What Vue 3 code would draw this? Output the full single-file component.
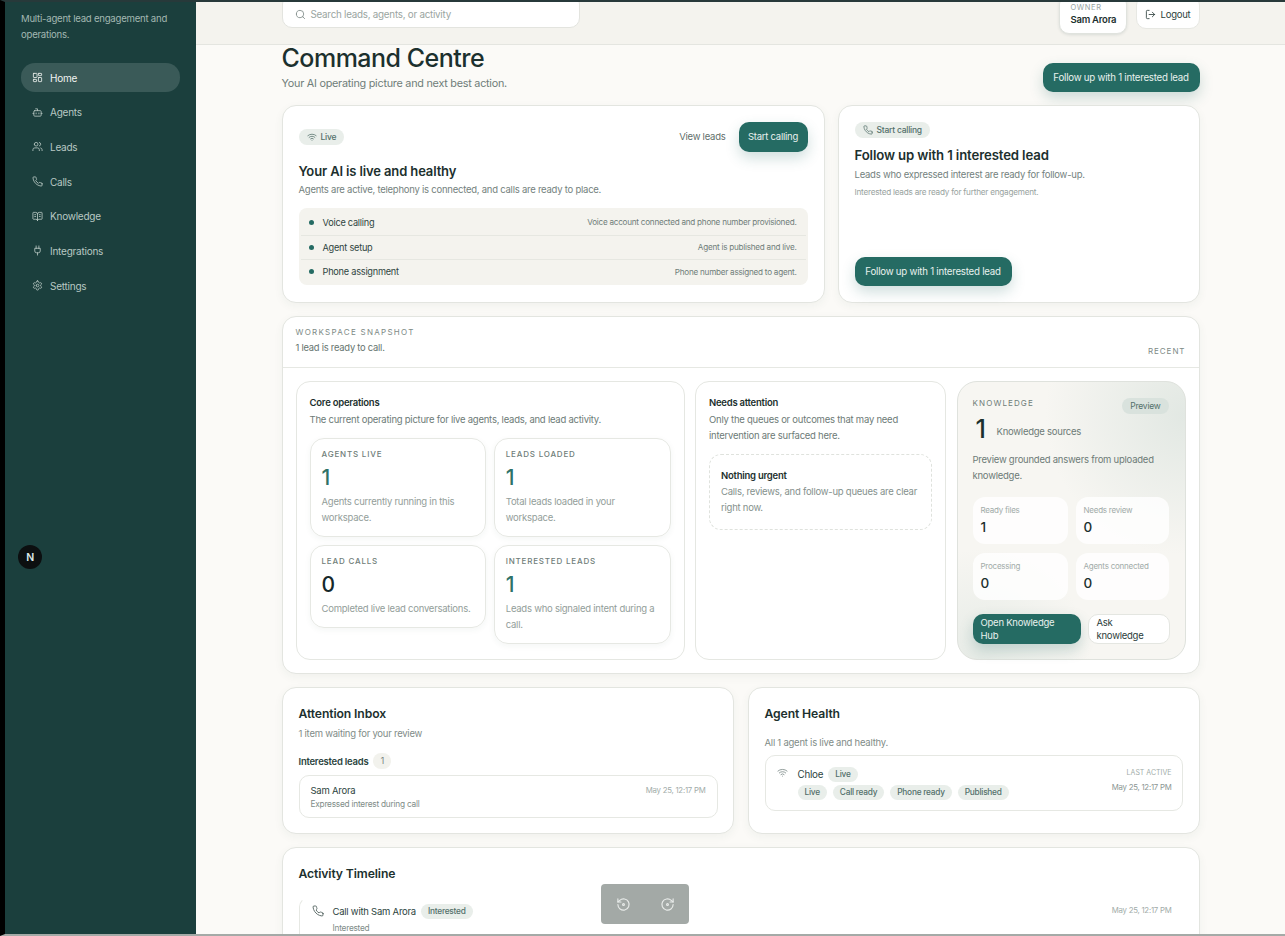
<script setup>
import { h } from 'vue'

const ICONS = {
  home: ['M4 3h6a1 1 0 0 1 1 1v7a1 1 0 0 1-1 1H4a1 1 0 0 1-1-1V4a1 1 0 0 1 1-1z', 'M15 3h5a1 1 0 0 1 1 1v3a1 1 0 0 1-1 1h-5a1 1 0 0 1-1-1V4a1 1 0 0 1 1-1z', 'M15 12h5a1 1 0 0 1 1 1v7a1 1 0 0 1-1 1h-5a1 1 0 0 1-1-1v-7a1 1 0 0 1 1-1z', 'M4 16h5a1 1 0 0 1 1 1v3a1 1 0 0 1-1 1H4a1 1 0 0 1-1-1v-3a1 1 0 0 1 1-1z'],
  bot: ['M12 8V4H8', 'M6 8h12a2 2 0 0 1 2 2v8a2 2 0 0 1-2 2H6a2 2 0 0 1-2-2v-8a2 2 0 0 1 2-2z', 'M2 14h2', 'M20 14h2', 'M15 13v2', 'M9 13v2'],
  users: ['M16 21v-2a4 4 0 0 0-4-4H6a4 4 0 0 0-4 4v2', 'M5 7a4 4 0 1 0 8 0a4 4 0 1 0-8 0', 'M22 21v-2a4 4 0 0 0-3-3.87', 'M16 3.13a4 4 0 0 1 0 7.75'],
  phone: ['M22 16.92v3a2 2 0 0 1-2.18 2 19.79 19.79 0 0 1-8.63-3.07 19.5 19.5 0 0 1-6-6 19.79 19.79 0 0 1-3.07-8.67A2 2 0 0 1 4.11 2h3a2 2 0 0 1 2 1.72 12.84 12.84 0 0 0 .7 2.81 2 2 0 0 1-.45 2.11L8.09 9.91a16 16 0 0 0 6 6l1.27-1.27a2 2 0 0 1 2.11-.45 12.84 12.84 0 0 0 2.81.7A2 2 0 0 1 22 16.92z'],
  book: ['M12 7v14', 'M16 12h2', 'M16 8h2', 'M3 18a1 1 0 0 1-1-1V4a1 1 0 0 1 1-1h5a4 4 0 0 1 4 4 4 4 0 0 1 4-4h5a1 1 0 0 1 1 1v13a1 1 0 0 1-1 1h-6a3 3 0 0 0-3 3 3 3 0 0 0-3-3z', 'M6 12h2', 'M6 8h2'],
  plug: ['M12 22v-5', 'M9 8V2', 'M15 8V2', 'M18 8v5a4 4 0 0 1-4 4h-4a4 4 0 0 1-4-4V8Z'],
  settings: ['M12.22 2h-.44a2 2 0 0 0-2 2v.18a2 2 0 0 1-1 1.73l-.43.25a2 2 0 0 1-2 0l-.15-.08a2 2 0 0 0-2.73.73l-.22.38a2 2 0 0 0 .73 2.73l.15.1a2 2 0 0 1 1 1.72v.51a2 2 0 0 1-1 1.74l-.15.09a2 2 0 0 0-.73 2.73l.22.38a2 2 0 0 0 2.73.73l.15-.08a2 2 0 0 1 2 0l.43.25a2 2 0 0 1 1 1.73V20a2 2 0 0 0 2 2h.44a2 2 0 0 0 2-2v-.18a2 2 0 0 1 1-1.73l.43-.25a2 2 0 0 1 2 0l.15.08a2 2 0 0 0 2.73-.73l.22-.39a2 2 0 0 0-.73-2.73l-.15-.08a2 2 0 0 1-1-1.74v-.5a2 2 0 0 1 1-1.74l.15-.09a2 2 0 0 0 .73-2.73l-.22-.38a2 2 0 0 0-2.73-.73l-.15.08a2 2 0 0 1-2 0l-.43-.25a2 2 0 0 1-1-1.73V4a2 2 0 0 0-2-2z', 'M9 12a3 3 0 1 0 6 0a3 3 0 1 0-6 0'],
  search: ['M3 11a8 8 0 1 0 16 0a8 8 0 1 0-16 0', 'm21 21-4.3-4.3'],
  logout: ['M9 21H5a2 2 0 0 1-2-2V5a2 2 0 0 1 2-2h4', 'M16 17l5-5-5-5', 'M21 12H9'],
  wifi: ['M12 20h.01', 'M2 8.82a15 15 0 0 1 20 0', 'M5 12.859a10 10 0 0 1 14 0', 'M8.5 16.429a5 5 0 0 1 7 0'],
  back: ['M3 12a9 9 0 1 0 3-6.7L3 8', 'M3 3v5h5', 'M10.5 12a1.5 1.5 0 1 0 3 0a1.5 1.5 0 1 0-3 0'],
  forward: ['M21 12a9 9 0 1 1-3-6.7L21 8', 'M21 3v5h-5', 'M10.5 12a1.5 1.5 0 1 0 3 0a1.5 1.5 0 1 0-3 0']
}

// small stroke icon, lucide-like
const Icon = (props) =>
  h(
    'svg',
    {
      width: props.size || 12,
      height: props.size || 12,
      viewBox: '0 0 24 24',
      fill: 'none',
      stroke: 'currentColor',
      'stroke-width': 1.8,
      'stroke-linecap': 'round',
      'stroke-linejoin': 'round'
    },
    ICONS[props.name].map((d) => h('path', { d }))
  )
Icon.props = ['name', 'size']

const navItems = [
  { label: 'Home', icon: 'home', active: true },
  { label: 'Agents', icon: 'bot' },
  { label: 'Leads', icon: 'users' },
  { label: 'Calls', icon: 'phone' },
  { label: 'Knowledge', icon: 'book' },
  { label: 'Integrations', icon: 'plug' },
  { label: 'Settings', icon: 'settings' }
]

const checks = [
  { name: 'Voice calling', note: 'Voice account connected and phone number provisioned.' },
  { name: 'Agent setup', note: 'Agent is published and live.' },
  { name: 'Phone assignment', note: 'Phone number assigned to agent.' }
]

const metrics = [
  { label: 'AGENTS LIVE', value: 1, text: 'Agents currently running in this workspace.' },
  { label: 'LEADS LOADED', value: 1, text: 'Total leads loaded in your workspace.' },
  { label: 'LEAD CALLS', value: 0, text: 'Completed live lead conversations.' },
  { label: 'INTERESTED LEADS', value: 1, text: 'Leads who signaled intent during a call.' }
]

const knowledgeStats = [
  { label: 'Ready files', value: 1 },
  { label: 'Needs review', value: 0 },
  { label: 'Processing', value: 0 },
  { label: 'Agents connected', value: 0 }
]

const agentTags = ['Live', 'Call ready', 'Phone ready', 'Published']
</script>

<template>
  <div class="frame">
    <aside class="sidebar">
      <p class="tagline">Multi-agent lead engagement and operations.</p>
      <nav class="nav">
        <a v-for="item in navItems" :key="item.label" :class="['nav-item', { active: item.active }]">
          <Icon :name="item.icon" :size="11" />
          <span>{{ item.label }}</span>
        </a>
      </nav>
      <div class="next-badge">N</div>
    </aside>

    <main class="main">
      <header class="topbar">
        <div class="topbar-inner">
          <div class="search">
            <Icon name="search" :size="11" />
            <span>Search leads, agents, or activity</span>
          </div>
          <div class="owner">
            <small>OWNER</small>
            <strong>Sam Arora</strong>
          </div>
          <button class="logout">
            <Icon name="logout" :size="11" />
            <span>Logout</span>
          </button>
        </div>
      </header>

      <div class="content">
        <section class="title-row">
          <div>
            <h1>Command Centre</h1>
            <p>Your AI operating picture and next best action.</p>
          </div>
          <button class="btn follow-btn">Follow up with 1 interested lead</button>
        </section>

        <section class="hero-row">
          <div class="card status-card">
            <div class="status-top">
              <span class="badge"><Icon name="wifi" :size="10" />Live</span>
              <div class="status-actions">
                <span class="link">View leads</span>
                <button class="btn">Start calling</button>
              </div>
            </div>
            <h2>Your AI is live and healthy</h2>
            <p class="desc">Agents are active, telephony is connected, and calls are ready to place.</p>
            <ul class="checks">
              <li v-for="c in checks" :key="c.name">
                <i class="dot"></i>
                <span class="check-name">{{ c.name }}</span>
                <span class="check-note">{{ c.note }}</span>
              </li>
            </ul>
          </div>

          <div class="card next-card">
            <span class="badge"><Icon name="phone" :size="10" />Start calling</span>
            <h2>Follow up with 1 interested lead</h2>
            <p class="desc">Leads who expressed interest are ready for follow-up.</p>
            <p class="fine">Interested leads are ready for further engagement.</p>
            <button class="btn follow-btn next-btn">Follow up with 1 interested lead</button>
          </div>
        </section>

        <section class="card snapshot">
          <div class="snap-head">
            <div>
              <div class="eyebrow">WORKSPACE SNAPSHOT</div>
              <p class="snap-sub">1 lead is ready to call.</p>
            </div>
            <div class="eyebrow recent">RECENT</div>
          </div>
          <div class="snap-grid">
            <div class="panel">
              <h3>Core operations</h3>
              <p class="panel-desc">The current operating picture for live agents, leads, and lead activity.</p>
              <div class="metrics">
                <div v-for="m in metrics" :key="m.label" class="metric">
                  <div class="metric-label">{{ m.label }}</div>
                  <div :class="['metric-value', { zero: m.value === 0 }]">{{ m.value }}</div>
                  <p>{{ m.text }}</p>
                </div>
              </div>
            </div>

            <div class="panel">
              <h3>Needs attention</h3>
              <p class="panel-desc">Only the queues or outcomes that may need intervention are surfaced here.</p>
              <div class="empty">
                <h3>Nothing urgent</h3>
                <p>Calls, reviews, and follow-up queues are clear right now.</p>
              </div>
            </div>

            <div class="panel knowledge">
              <div class="know-top">
                <div class="metric-label know-label">KNOWLEDGE</div>
                <span class="preview">Preview</span>
              </div>
              <div class="know-count">
                <strong>1</strong>
                <span>Knowledge sources</span>
              </div>
              <p class="know-desc">Preview grounded answers from uploaded knowledge.</p>
              <div class="know-stats">
                <div v-for="s in knowledgeStats" :key="s.label" class="know-stat">
                  <small>{{ s.label }}</small>
                  <b>{{ s.value }}</b>
                </div>
              </div>
              <div class="know-actions">
                <button class="btn know-open">Open Knowledge Hub</button>
                <button class="know-ask">Ask knowledge</button>
              </div>
            </div>
          </div>
        </section>

        <section class="two-col">
          <div class="card inbox">
            <h2>Attention Inbox</h2>
            <p class="sub">1 item waiting for your review</p>
            <div class="group-title">Interested leads <span class="count">1</span></div>
            <div class="row-box lead-box">
              <div>
                <div class="row-name">Sam Arora</div>
                <div class="row-sub">Expressed interest during call</div>
              </div>
              <time>May 25, 12:17 PM</time>
            </div>
          </div>

          <div class="card health">
            <h2>Agent Health</h2>
            <p class="sub health-sub">All 1 agent is live and healthy.</p>
            <div class="row-box agent-box">
              <span class="agent-icon"><Icon name="wifi" :size="11" /></span>
              <div class="agent-main">
                <div class="agent-name">Chloe <span class="tag">Live</span></div>
                <div class="agent-tags">
                  <span v-for="t in agentTags" :key="t" class="tag">{{ t }}</span>
                </div>
              </div>
              <div class="agent-time">
                <small>LAST ACTIVE</small>
                <time>May 25, 12:17 PM</time>
              </div>
            </div>
          </div>
        </section>

        <section class="card timeline">
          <h2>Activity Timeline</h2>
          <div class="row-box event">
            <span class="event-icon"><Icon name="phone" :size="12" /></span>
            <div class="event-main">
              <div class="event-name">Call with Sam Arora <span class="tag">Interested</span></div>
              <div class="row-sub">Interested</div>
            </div>
            <time>May 25, 12:17 PM</time>
          </div>
        </section>
      </div>

      <div class="player">
        <Icon name="back" :size="15" />
        <Icon name="forward" :size="15" />
      </div>
    </main>
  </div>
</template>

<style>
html,
body {
  margin: 0;
  overflow: hidden;
}
</style>

<style scoped>
.frame {
  display: flex;
  position: relative;
  box-sizing: border-box;
  height: 936px;
  overflow: hidden;
  border-top: 2px solid #27393a;
  border-left: 5px solid #000;
  border-bottom: 2px solid #a4aaa7;
  font-family: Inter, "Noto Sans", sans-serif;
  color: #1c302e;
  letter-spacing: -0.015em;
}

h1, h2, h3, p, ul {
  margin: 0;
  padding: 0;
}

button {
  font-family: inherit;
  letter-spacing: inherit;
  cursor: pointer;
}

.sidebar {
  flex: 0 0 191px;
  box-sizing: border-box;
  padding: 9px 16px 0;
  background: #1b3f3d;
}

.tagline {
  font-size: 9.6px;
  line-height: 16px;
  color: #a3b8b2;
}

.nav {
  margin-top: 20px;
  display: flex;
  flex-direction: column;
  gap: 5.7px;
}

.nav-item {
  display: flex;
  align-items: center;
  gap: 7px;
  height: 29px;
  padding-left: 11px;
  border-radius: 14px;
  font-size: 10px;
  color: #b8c8c3;
}

.nav-item.active {
  background: #3a5a58;
  color: #f1f4f1;
}

.next-badge {
  position: absolute;
  left: 13px;
  top: 543px;
  width: 24px;
  height: 24px;
  display: flex;
  align-items: center;
  justify-content: center;
  border-radius: 50%;
  background: #0c0f10;
  color: #dfe9e9;
  font-size: 10.5px;
  font-weight: 600;
}

.main {
  flex: 1;
  min-width: 0;
  background: #fbfaf7;
}

.topbar {
  box-sizing: border-box;
  height: 43px;
  display: flex;
  justify-content: center;
  background: #f4f3ee;
  border-bottom: 1px solid #e4e5e0;
}

.topbar-inner {
  width: 918px;
  display: flex;
  align-items: flex-end;
}

.search {
  box-sizing: border-box;
  width: 298px;
  height: 34px;
  margin-bottom: 16px;
  margin-right: auto;
  flex: none;
  display: flex;
  align-items: flex-end;
  gap: 5px;
  padding: 0 12px 7px;
  background: #fff;
  border: 1px solid #e3e4df;
  border-radius: 10px;
  font-size: 9.8px;
  color: #9aa5a1;
}

.search svg {
  color: #7c8885;
}

.owner {
  box-sizing: border-box;
  width: 68px;
  height: 40px;
  margin-bottom: 10px;
  margin-right: 9px;
  padding: 8px 11px 0;
  background: #fff;
  border: 1px solid #e0e3de;
  border-radius: 10px;
  box-shadow: 0 1px 3px rgba(30, 60, 55, 0.12);
}

.owner small {
  display: block;
  font-size: 7.5px;
  line-height: 9px;
  letter-spacing: 0.08em;
  color: #9aa5a1;
}

.owner strong {
  display: block;
  margin-top: 2px;
  font-size: 9.5px;
  line-height: 12px;
  font-weight: 600;
  white-space: nowrap;
}

.logout {
  box-sizing: border-box;
  width: 64px;
  height: 34px;
  margin-bottom: 15px;
  padding: 5px 0 0;
  display: flex;
  align-items: center;
  justify-content: center;
  gap: 5px;
  background: #fff;
  border: 1px solid #e7e8e3;
  border-radius: 10px;
  color: #2d3f3d;
  font-size: 9.5px;
}

.content {
  width: 918px;
  margin: 0 auto;
}

.title-row {
  display: flex;
  justify-content: space-between;
  align-items: flex-end;
}

h1 {
  font-size: 25px;
  line-height: 26px;
  font-weight: 500;
  letter-spacing: -0.02em;
}

.title-row p {
  margin-top: 5px;
  font-size: 10.8px;
  line-height: 16px;
  color: #6f7d79;
}

.btn {
  height: 29.5px;
  padding: 0 10px;
  border: 0;
  border-radius: 10px;
  background: #256b63;
  color: #e8f1ee;
  font-size: 9.5px;
  box-shadow: 0 6px 14px rgba(37, 107, 99, 0.22);
  white-space: nowrap;
}

.follow-btn {
  width: 157px;
  padding: 0;
  font-size: 9.7px;
}

.hero-row {
  margin-top: 13px;
  display: grid;
  grid-template-columns: 543px 362px;
  gap: 13px;
}

.card {
  box-sizing: border-box;
  background: #fff;
  border: 1px solid #e3e5e0;
  border-radius: 14px;
  box-shadow: 0 3px 10px rgba(40, 70, 65, 0.05);
}

.status-card {
  height: 198px;
  padding: 16px;
}

.status-top {
  display: flex;
  justify-content: space-between;
  align-items: center;
}

.status-actions {
  display: flex;
  align-items: center;
  gap: 13px;
}

.link {
  font-size: 9.5px;
  color: #5f6f6b;
}

.status-actions .btn {
  width: 69px;
  padding: 0;
}

.badge {
  display: inline-flex;
  align-items: center;
  gap: 4px;
  height: 16px;
  padding: 0 8px;
  border-radius: 8px;
  background: #e9eeea;
  color: #53706a;
  font-size: 8.5px;
  font-weight: 500;
}

h2 {
  font-size: 12.2px;
  line-height: 18px;
  font-weight: 600;
  letter-spacing: -0.01em;
}

.status-card h2 {
  margin-top: 10px;
  font-size: 13px;
}

.desc {
  margin-top: 2px;
  font-size: 9.5px;
  line-height: 16px;
  color: #74827e;
}

.checks {
  margin-top: 10px;
  list-style: none;
  padding: 2.5px 2px 1px;
  background: #f4f3ee;
  border-radius: 8px;
}

.checks li {
  box-sizing: border-box;
  display: flex;
  align-items: center;
  height: 24.5px;
  padding: 0 9px 0 8px;
  border-top: 1px solid #e6e7e1;
}

.checks li:first-child {
  border-top: 0;
}

.dot {
  width: 5px;
  height: 5px;
  border-radius: 50%;
  background: #256b63;
  margin-right: 9px;
}

.check-name {
  font-size: 9.2px;
  color: #2f4541;
}

.check-note {
  margin-left: auto;
  font-size: 8.15px;
  color: #6f7d79;
}

.next-card {
  height: 198px;
  padding: 16px;
  display: flex;
  flex-direction: column;
  align-items: flex-start;
}

.next-card h2 {
  margin-top: 8px;
  font-size: 13.2px;
}

.next-card .desc {
  margin-top: 3px;
}

.fine {
  margin-top: 1px;
  font-size: 8.2px;
  line-height: 16px;
  color: #98a3a0;
}

.next-btn {
  margin-top: auto;
}

.snapshot {
  margin-top: 13px;
  height: 358px;
}

.snap-head {
  box-sizing: border-box;
  height: 51px;
  display: flex;
  justify-content: space-between;
  padding: 10px 13px 0 13px;
  border-bottom: 1px solid #e6e8e3;
}

.eyebrow {
  font-size: 8px;
  line-height: 11px;
  letter-spacing: 0.16em;
  color: #7d8a86;
}

.recent {
  align-self: flex-end;
  margin-bottom: 10px;
  letter-spacing: 0.12em;
}

.snap-sub {
  margin-top: 3px;
  font-size: 9.4px;
  line-height: 14px;
  color: #66756f;
}

.snap-grid {
  display: grid;
  grid-template-columns: 389fr 251fr 229fr;
  gap: 10.5px;
  padding: 13px 13px 0;
  height: 293px;
  box-sizing: border-box;
}

.panel {
  box-sizing: border-box;
  height: 279px;
  padding: 13px;
  border: 1px solid #e5e7e2;
  border-radius: 14px;
  background: #fff;
}

h3 {
  font-size: 9.5px;
  line-height: 16px;
  font-weight: 600;
}

.panel-desc {
  margin-top: 1px;
  font-size: 9.5px;
  line-height: 16px;
  color: #6d7b77;
}

.metrics {
  margin-top: 10px;
  display: grid;
  grid-template-columns: 1fr 1fr;
  gap: 7.5px;
  align-items: start;
}

.metric {
  padding: 10px 11px 10px;
  border: 1px solid #e6e8e3;
  border-radius: 14px;
  box-shadow: 0 2px 6px rgba(40, 70, 65, 0.05);
}

.metric-label {
  font-size: 8px;
  line-height: 11px;
  letter-spacing: 0.1em;
  font-weight: 500;
  color: #6f7d79;
}

.metric-value {
  margin-top: 4px;
  font-size: 21px;
  line-height: 27px;
  font-weight: 500;
  color: #2f7268;
}

.metric-value.zero {
  color: #16282a;
}

.metric p {
  margin-top: 3px;
  font-size: 9.5px;
  line-height: 16px;
  color: #939e9a;
}

.empty {
  box-sizing: border-box;
  height: 76px;
  margin-top: 10px;
  padding: 13px 11px 0;
  border: 1px dashed #dfe2dd;
  border-radius: 12px;
}

.empty p {
  font-size: 9.5px;
  line-height: 16px;
  color: #85918d;
}

.knowledge {
  padding: 16px 15px;
  background:
    radial-gradient(circle at 100% 12%, #e2e8e3 0%, rgba(226, 232, 227, 0) 42%),
    radial-gradient(circle at 10% 100%, #e6ebe6 0%, rgba(230, 235, 230, 0) 32%),
    #f7f6f2;
  border-radius: 20px;
  border-color: #dfe2dd;
}

.know-top {
  display: flex;
  justify-content: space-between;
  align-items: flex-start;
}

.know-label {
  letter-spacing: 0.14em;
  font-weight: 400;
}

.preview {
  height: 16px;
  margin-right: 1px;
  padding: 0 8px;
  border-radius: 8px;
  background: #d9e2dd;
  color: #53706a;
  font-size: 8.5px;
  line-height: 16px;
}

.know-count {
  display: flex;
  align-items: flex-end;
  margin-top: 1px;
}

.know-count strong {
  width: 24px;
  padding-left: 3px;
  box-sizing: border-box;
  font-size: 25px;
  line-height: 28px;
  font-weight: 500;
}

.know-count span {
  margin-bottom: 6px;
  font-size: 9.5px;
  color: #6d7b77;
}

.know-desc {
  margin-top: 9px;
  font-size: 9.5px;
  line-height: 16px;
  color: #6d7b77;
}

.know-stats {
  margin-top: 13px;
  display: grid;
  grid-template-columns: 95px 93px;
  gap: 9px 8px;
}

.know-stat {
  box-sizing: border-box;
  height: 47px;
  padding: 7px 8px;
  background: rgba(255, 255, 255, 0.8);
  border-radius: 12px;
}

.know-stat small {
  display: block;
  font-size: 8px;
  line-height: 12px;
  color: #a1aba8;
  white-space: nowrap;
}

.know-stat b {
  display: block;
  margin-top: 2px;
  font-size: 13.5px;
  line-height: 18px;
  font-weight: 500;
}

.know-actions {
  margin-top: 14px;
  display: grid;
  grid-template-columns: 108px 82px;
  gap: 7px;
}

.btn.know-open {
  height: 29.5px;
  padding: 0 8px;
  text-align: left;
  white-space: normal;
  line-height: 13px;
  font-size: 9.5px;
}

.know-ask {
  height: 29.5px;
  padding: 0 8px;
  text-align: left;
  line-height: 13px;
  font-size: 9.5px;
  color: #2b3d3b;
  background: #fff;
  border: 1px solid #e4e6e1;
  border-radius: 10px;
}

.two-col {
  margin-top: 13px;
  display: grid;
  grid-template-columns: 452px 452px;
  gap: 14px;
}

.inbox {
  height: 147px;
  padding: 17px 15px 17px 16px;
}

.health {
  height: 147px;
  padding: 17px 16px;
}

.sub {
  margin-top: 3px;
  font-size: 9.5px;
  line-height: 16px;
  color: #7f8c88;
}

.health-sub {
  margin-top: 12px;
}

.group-title {
  margin-top: 11px;
  display: flex;
  align-items: center;
  gap: 5px;
  font-size: 9.5px;
  font-weight: 600;
  color: #2c4440;
}

.count {
  width: 18px;
  height: 16px;
  border-radius: 8px;
  background: #f2f2ed;
  text-align: center;
  line-height: 16px;
  font-size: 8.5px;
  font-weight: 400;
  color: #74827e;
}

.row-box {
  box-sizing: border-box;
  border: 1px solid #e6e8e3;
  border-radius: 10px;
}

.lead-box {
  height: 43px;
  margin-top: 6px;
  padding: 8px 11px;
  display: flex;
  justify-content: space-between;
}

.row-name {
  font-size: 9.5px;
  line-height: 14px;
  color: #2c4440;
}

.row-sub {
  font-size: 8.3px;
  line-height: 12px;
  color: #808c88;
}

time {
  font-size: 7.8px;
  line-height: 12px;
  color: #a2aca9;
  white-space: nowrap;
}

.agent-box {
  height: 56px;
  margin-top: 4px;
  padding: 11px 10px 11px 11px;
  display: flex;
}

.agent-icon {
  width: 21px;
  color: #7b8885;
  line-height: 11px;
}

.agent-main {
  flex: 1;
}

.agent-name {
  display: flex;
  align-items: center;
  gap: 5px;
  font-size: 9.8px;
  color: #2c4440;
}

.tag {
  display: inline-block;
  height: 15px;
  padding: 0 7px;
  border-radius: 8px;
  background: #e9eeea;
  color: #53706a;
  font-size: 8.3px;
  line-height: 15px;
  font-weight: 500;
}

.agent-tags {
  margin-top: 3px;
  display: flex;
  gap: 6px;
}

.agent-time {
  text-align: right;
}

.agent-time small {
  display: block;
  font-size: 7px;
  line-height: 11px;
  color: #a2aca9;
  letter-spacing: 0;
}

.agent-time time {
  display: block;
  margin-top: 3px;
  color: #8b9693;
}

.timeline {
  margin-top: 13px;
  height: 120px;
  padding: 17px 16px;
}

.event {
  height: 60px;
  margin-top: 14px;
  padding: 6px 11px 0 12px;
  display: flex;
  border-width: 1px 0 0 1px;
  border-top-color: transparent;
  border-radius: 10px 0 0 0;
}

.event-icon {
  width: 21px;
  line-height: 12px;
  padding-top: 1px;
  color: #51625f;
}

.event-main {
  flex: 1;
}

.event-name {
  display: flex;
  align-items: center;
  gap: 5px;
  font-size: 9.5px;
  color: #2c4440;
}

.event-main .row-sub {
  margin-top: 3px;
}

.player {
  position: absolute;
  left: 596px;
  top: 882px;
  box-sizing: border-box;
  width: 88px;
  height: 40px;
  display: flex;
  align-items: center;
  justify-content: center;
  gap: 29px;
  border-radius: 4px;
  background: #a3a9a6;
  color: #e8ebe9;
}
</style>
